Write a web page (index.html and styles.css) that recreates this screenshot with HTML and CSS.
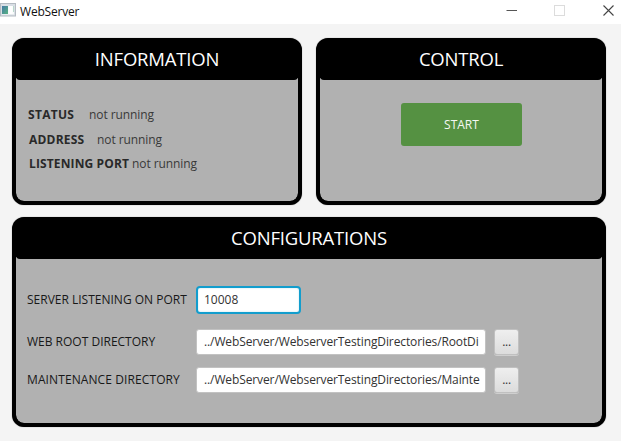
FILE: index.html
```
<!DOCTYPE html>
<html lang="en">
<head>
<meta charset="utf-8">
<title>WebServer</title>
<link rel="stylesheet" href="styles.css">
</head>
<body>
<header class="titlebar">
  <svg class="app-icon" width="16" height="14" viewBox="0 0 16 14">
    <defs><linearGradient id="g" x1="0" y1="0" x2="1" y2="1"><stop offset="0" stop-color="#4479a5"/><stop offset="1" stop-color="#57b382"/></linearGradient></defs>
    <rect x="0.5" y="0.5" width="15" height="12.5" fill="#d9dfe5" stroke="#b4bbc2"/>
    <rect x="2" y="3" width="12" height="8.5" fill="#f7fafa"/>
    <rect x="2" y="3" width="6" height="8" fill="url(#g)"/>
    <rect x="9.5" y="3" width="3" height="8" fill="#fff"/>
    <rect x="13" y="3" width="1" height="6" fill="#b9d8cb"/>
  </svg>
  <span class="app-name">WebServer</span>
  <svg class="window-controls" width="112" height="12" viewBox="0 0 112 12" fill="none">
    <path d="M0.5 6.5H11" stroke="#555"/>
    <rect x="48.5" y="1.5" width="10" height="10" stroke="#dcdcdc"/>
    <path d="M97.5 1.5l10 10M107.5 1.5l-10 10" stroke="#444" stroke-width="1.1"/>
  </svg>
</header>
<main class="panels">
  <section class="panel information">
    <h2>INFORMATION</h2>
    <div class="panel-body">
      <p class="info status"><b>STATUS</b><span>not running</span></p>
      <p class="info address"><b>ADDRESS</b><span>not running</span></p>
      <p class="info port"><b>LISTENING PORT</b><span>not running</span></p>
    </div>
  </section>
  <section class="panel control">
    <h2>CONTROL</h2>
    <div class="panel-body"><button class="start">START</button></div>
  </section>
  <section class="panel configurations">
    <h2>CONFIGURATIONS</h2>
    <div class="panel-body">
      <div class="row first"><span class="label server">SERVER LISTENING ON PORT</span><div class="field focused"><span>10008</span></div></div>
      <div class="row second"><span class="label">WEB ROOT DIRECTORY</span><div class="field path"><span>../WebServer/WebserverTestingDirectories/RootDi</span></div><button class="browse">...</button></div>
      <div class="row"><span class="label maintenance">MAINTENANCE DIRECTORY</span><div class="field path"><span>../WebServer/WebserverTestingDirectories/Mainte</span></div><button class="browse">...</button></div>
    </div>
  </section>
</main>
</body>
</html>
```
FILE: styles.css
```
* { box-sizing: border-box; }

body {
  margin: 0;
  width: 621px;
  height: 441px;
  overflow: hidden;
  background: #f4f4f4;
  color: #333;
  font: 12px/16px "Open Sans", "Noto Sans", sans-serif;
}

h2, p { margin: 0; font-weight: 400; }
button { border: 0; padding: 0; font: inherit; }

.titlebar {
  display: flex;
  align-items: flex-start;
  height: 24px;
  padding: 3px 3px 0 0;
  background: #fff;
}
.app-name {
  margin: 1px 0 0 4px;
  color: #111;
  letter-spacing: -0.2px;
}
.window-controls { margin: 1px 0 0 auto; }

.panels {
  display: grid;
  grid-template-columns: 290px 290px;
  grid-template-rows: 167px 210px;
  gap: 12px 14px;
  padding: 14px 0 0 12px;
}
.panel {
  overflow: hidden;
  border: 4px solid #000;
  border-radius: 12px;
  background: #000;
  box-shadow: 0 0 1px #0008;
}
.configurations { grid-column: 1 / 3; }
.panel h2 {
  position: relative;
  height: 38px;
  border-radius: 0 0 4px 4px;
  background: #000;
  color: #fff;
  font-size: 18.5px;
  line-height: 34px;
  letter-spacing: -0.2px;
  text-align: center;
}
.panel-body {
  height: calc(100% - 36px);
  margin-top: -2px;
  background: #b1b1b1;
  border-radius: 0 0 8px 8px;
}

.information .panel-body { padding: 29px 0 0 12px; }
.info { display: flex; height: 16px; }
.info b { color: #292929; letter-spacing: 0.2px; }
.info span { color: #393939; letter-spacing: -0.08px; }
.status b { width: 61px; letter-spacing: 0.3px; }
.address { margin: 9px 0 8px 1px; }
.address b { width: 68px; }
.port { margin-left: 1px; }
.port b { width: 103px; letter-spacing: 0.13px; }

.control .panel-body { padding: 25px 0 0 81px; }
.start {
  display: block;
  width: 121px;
  height: 43px;
  border-radius: 3px;
  background: #559142;
  color: #f4f8f2;
}

.configurations .panel-body { padding: 30px 0 0 11px; }
.row { display: flex; align-items: center; height: 26px; }
.row.first { margin-bottom: 16px; }
.row.second { margin-bottom: 12px; }
.label { width: 169px; color: #181818; white-space: nowrap; }
.maintenance { letter-spacing: 0.1px; }
.field {
  flex: none;
  height: 26px;
  padding: 4px 7px;
  border: 1px solid #c2c2c2;
  border-radius: 3px;
  background: #fff;
  color: #333;
}
.field span { display: block; white-space: nowrap; }
.path { width: 290px; letter-spacing: -0.11px; }
.focused {
  width: 105px;
  height: 28px;
  padding: 4px 6px;
  border: 2px solid #129dcd;
  border-radius: 4px;
  box-shadow: inset 0 0 2px #b7dfec;
}
.browse {
  width: 25px;
  height: 26px;
  margin-left: 8px;
  border: 1px solid #c0c0c0;
  border-radius: 3px;
  background: linear-gradient(#efefef, #dcdcdc);
  box-shadow: 0 1px #cfcfcf;
  color: #333;
  line-height: 16px;
  letter-spacing: -0.3px;
}
```
